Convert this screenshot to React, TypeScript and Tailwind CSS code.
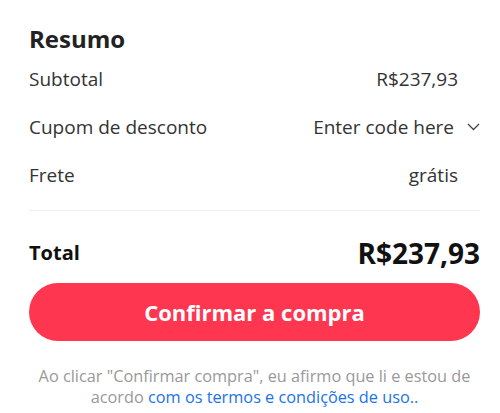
import React from 'react'

export default function App() {
  const rows = [
    { label: 'Subtotal', value: 'R$237,93' },
    { label: 'Cupom de desconto', value: 'Enter code here', select: true },
    { label: 'Frete', value: 'grátis' },
  ]

  return (
    <div className="w-[500px] h-[413px] bg-white font-['Open_Sans',sans-serif] text-[#333]">
      <div className="pl-[29px] pr-[20px] pt-[23px]">
        <h2 className="text-[24px] leading-[32px] font-bold text-[#222]">Resumo</h2>

        <div>
          {rows.map((row) => (
            <div key={row.label} className="flex items-center justify-between h-[48px] text-[19px]">
              <span>{row.label}</span>
              {row.select ? (
                <span className="flex items-center gap-[13px]">
                  {row.value}
                  <svg width="13" height="8" viewBox="0 0 13 8" fill="none" stroke="#444" strokeWidth="1.3">
                    <path d="M1 1l5.5 5.5L12 1" />
                  </svg>
                </span>
              ) : (
                <span className="pr-[22px]">{row.value}</span>
              )}
            </div>
          ))}
        </div>

        <div className="mt-[11px] h-px bg-[#eeeeee]" />

        <div className="flex items-center justify-between h-[34px] mt-[25px] mb-[13px]">
          <span className="text-[20px] font-bold text-[#111]">Total</span>
          <span className="text-[28px] font-bold text-[#111]">R$237,93</span>
        </div>

        <button className="w-full h-[58px] rounded-full bg-[#fe3650] text-white text-[22px] font-bold">
          Confirmar a compra
        </button>

        <p className="mt-[25px] text-center text-[16.3px] leading-[21px] text-[#999]">
          <span>Ao clicar "Confirmar compra", eu afirmo que li e estou de</span>
          <br />
          <span>acordo </span>
          <a className="text-[#1b73e8]">com os termos e condições de uso..</a>
        </p>
      </div>
    </div>
  )
}
